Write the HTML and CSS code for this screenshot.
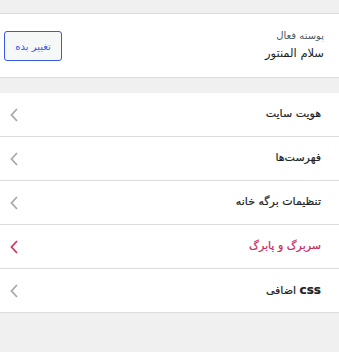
FILE: index.html
```html
<!DOCTYPE html>
<html lang="fa" dir="rtl">
<head>
<meta charset="utf-8">
<link rel="stylesheet" href="styles.css">
</head>
<body>
<div class="top"></div>
<div class="theme">
  <div class="theme-info">
    <div class="theme-label">پوسته فعال</div>
    <div class="theme-name">سلام المنتور</div>
  </div>
  <button class="change-btn">تغییر بده</button>
</div>
<div class="spacer"></div>
<ul class="sections">
  <li class="section"><span class="title">هویت سایت</span><svg class="chev" viewBox="0 0 8 14" width="8" height="14"><path d="M7 1 L1.5 7 L7 13" fill="none" stroke="currentColor" stroke-width="1.8"/></svg></li>
  <li class="section"><span class="title">فهرست‌ها</span><svg class="chev" viewBox="0 0 8 14" width="8" height="14"><path d="M7 1 L1.5 7 L7 13" fill="none" stroke="currentColor" stroke-width="1.8"/></svg></li>
  <li class="section"><span class="title">تنظیمات برگه خانه</span><svg class="chev" viewBox="0 0 8 14" width="8" height="14"><path d="M7 1 L1.5 7 L7 13" fill="none" stroke="currentColor" stroke-width="1.8"/></svg></li>
  <li class="section active"><span class="title">سربرگ و پابرگ</span><svg class="chev" viewBox="0 0 8 14" width="8" height="14"><path d="M7 1 L1.5 7 L7 13" fill="none" stroke="currentColor" stroke-width="1.8"/></svg></li>
  <li class="section"><span class="title"><b class="latin">css</b> اضافی</span><svg class="chev" viewBox="0 0 8 14" width="8" height="14"><path d="M7 1 L1.5 7 L7 13" fill="none" stroke="currentColor" stroke-width="1.8"/></svg></li>
</ul>
</body>
</html>
```
FILE: styles.css
```css
html, body {
  margin: 0;
  padding: 0;
  background: #f0f0f1;
  font-family: "DejaVu Sans", "Liberation Sans", sans-serif;
  width: 339px;
  height: 352px;
  overflow: hidden;
}
.top {
  height: 13px;
  border-bottom: 1px solid #dcdcde;
}
.theme {
  background: #fff;
  border-bottom: 1px solid #dcdcde;
  display: flex;
  align-items: center;
  justify-content: space-between;
  padding: 0 15px 0 4px;
  box-sizing: border-box;
  height: 64px;
}
.theme-info {
  display: flex;
  flex-direction: column;
  gap: 5px;
  margin-top: -2px;
}
.theme-label {
  font-size: 10px;
  color: #50575e;
}
.theme-name {
  font-size: 11.5px;
  color: #1d2327;
}
.change-btn {
  width: 58px;
  height: 30px;
  border: 1px solid #3858e9;
  border-radius: 3px;
  background: #f6f7f7;
  color: #3858e9;
  font-family: inherit;
  font-size: 10px;
  padding: 0;
  margin-top: 1px;
}
.spacer {
  height: 15px;
}
.sections {
  list-style: none;
  margin: 0;
  padding: 0;
}
.section {
  background: #fff;
  height: 43px;
  border-bottom: 1px solid #dcdcde;
  display: flex;
  align-items: center;
  justify-content: space-between;
  padding: 0 18px 0 10px;
  color: #1d2327;
}
.title {
  font-size: 11px;
  font-weight: 400;
  margin-top: -2px;
  -webkit-text-stroke: 0.2px #1d2327;
}
.latin {
  font-family: "DejaVu Sans", sans-serif;
  font-weight: 700;
  font-size: 12px;
}
.chev {
  color: #a7aaad;
  margin-top: 1px;
}
.section.active {
  color: #c9245c;
}
.section.active .title {
  -webkit-text-stroke: 0.2px #c9245c;
}
.section.active .chev {
  color: #d6336c;
}
```
